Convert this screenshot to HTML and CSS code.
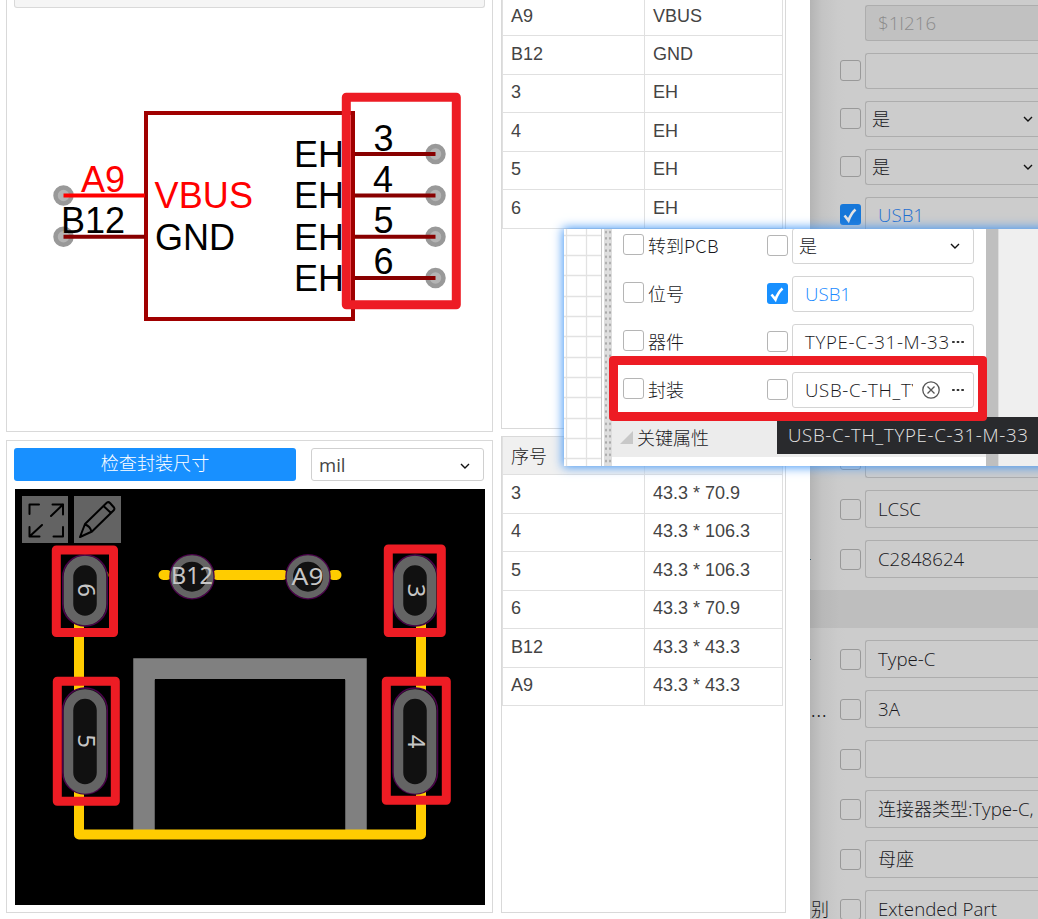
FILE: index.html
```html
<!DOCTYPE html>
<html lang="zh-CN">
<head>
<meta charset="utf-8">
<title>封装管理器</title>
<link rel="stylesheet" href="styles.css">
</head>
<body>
<div class="app">
  <main class="dialog">
    <div class="column previews">
      <section class="card symbol">
        <div class="strip"></div>
        <svg class="schematic" viewBox="7 8 485 423" width="485" height="423">
          <rect x="146" y="113" width="207" height="206" fill="none" stroke="#a00000" stroke-width="4"/>
          <g fill="#b4b4b4" stroke="#999" stroke-width="4.5">
            <circle cx="63.500" cy="195.500" r="8"/><circle cx="63.500" cy="236.700" r="8"/>
            <circle cx="435.500" cy="154" r="8"/><circle cx="435.500" cy="195.500" r="8"/>
            <circle cx="435.500" cy="236.700" r="8"/><circle cx="435.500" cy="278" r="8"/>
          </g>
          <g stroke="#880000" stroke-width="4">
            <path d="M63.500 236.700H145M355 154h80.500M355 195.500h80.500M355 236.700h80.500M355 278h80.500"/>
            <path d="M63.500 195.500H145" stroke="#f00"/>
          </g>
          <g class="pins">
            <text x="81" y="192" class="active">A9</text>
            <text x="61" y="233">B12</text>
            <text x="154.500" y="208" class="active" textLength="98.500">VBUS</text>
            <text x="155" y="250" textLength="80">GND</text>
            <text x="294" y="167">EH</text><text x="294" y="208">EH</text>
            <text x="294" y="250">EH</text><text x="294" y="291">EH</text>
            <text x="373.500" y="151">3</text><text x="373" y="192">4</text>
            <text x="373.500" y="233">5</text><text x="373.500" y="274">6</text>
          </g>
          <rect class="mark" x="346.300" y="97.300" width="110" height="207.500"/>
        </svg>
      </section>
      <section class="card footprint">
        <div class="toolbar">
          <button class="check-size">检查封装尺寸</button>
          <div class="select unit"><span>mil</span><svg class="chev" viewBox="0 0 10 6"><path d="M1 1l4 4 4-4"/></svg></div>
        </div>
        <svg class="board" viewBox="15 489 470 416" width="470" height="416">
          <rect x="15" y="489" width="470" height="416" fill="#000"/>
          <path d="M144 830V669H356V830" fill="none" stroke="#808080" stroke-width="21.500"/>
          <rect x="155" y="679" width="190" height="152" fill="#000"/>
          <g fill="none" stroke="#ffcc00" stroke-width="10" stroke-linecap="round" stroke-linejoin="round">
            <path d="M79 610V834.500H421V610M103.500 575H98M397.500 575H402M163.500 575H167M217 575H283M333 575H336.500"/>
          </g>
          <g fill="#111" stroke="#4b004b" stroke-width="1.500">
            <circle cx="192" cy="576.700" r="22"/><circle cx="308" cy="576.700" r="22"/>
            <rect x="62.800" y="555" width="44.500" height="71" rx="22"/><rect x="393" y="555" width="44.500" height="71" rx="22"/>
            <rect x="62.800" y="688" width="44.500" height="106" rx="22"/><rect x="393" y="688" width="44.500" height="106" rx="22"/>
          </g>
          <g fill="#111" stroke="#646464" stroke-width="9.500">
            <circle cx="192" cy="576.700" r="18.200" stroke-width="6.500"/><circle cx="308" cy="576.700" r="18.200" stroke-width="6.500"/>
            <rect x="68.500" y="560.500" width="33" height="60" rx="16.500"/><rect x="398.500" y="560.500" width="33" height="60" rx="16.500"/>
            <rect x="68.500" y="694" width="33" height="95" rx="16.500"/><rect x="398.500" y="694" width="33" height="95" rx="16.500"/>
          </g>
          <g class="pads">
            <text x="192" y="584" textLength="42" lengthAdjust="spacingAndGlyphs">B12</text>
            <text x="307.500" y="584.500" textLength="32" lengthAdjust="spacingAndGlyphs" class="wide">A9</text>
            <text transform="translate(77.500 590) rotate(90)">6</text>
            <text transform="translate(408 590.500) rotate(90)">3</text>
            <text transform="translate(77.500 741) rotate(90)">5</text>
            <text transform="translate(408 741.500) rotate(90)">4</text>
          </g>
          <path d="M22 496h46v47H22zM74 496h47v47H74z" fill="#636363"/>
          <g fill="none" stroke="#000" stroke-width="2" stroke-linejoin="round" stroke-linecap="round">
            <path d="M39 504.500H29.500V514M52.500 504.500H63V514.500M63 504.500L51 516M29.500 527V536.500H39.500M29.500 536.500L42 525M53.500 536.500H63V527"/>
            <path d="M80 537L85 524L107 502.500Q108.500 501.500 110 503L114 507.500Q115 509 113.500 510.500L92 531.500ZM85 524.500Q90 526 91.500 531.500M103.500 506L111 513"/>
          </g>
          <rect class="mark" x="56.300" y="550" width="57.200" height="82.500"/>
          <rect class="mark" x="388.300" y="549" width="53" height="83.500"/>
          <rect class="mark" x="57.300" y="681.300" width="58" height="120"/>
          <rect class="mark" x="386.300" y="681.300" width="60" height="119"/>
        </svg>
      </section>
    </div>
    <div class="column tables">
      <section class="card pins-card">
        <table>
          <tr><td>A9</td><td>VBUS</td></tr>
          <tr><td>B12</td><td>GND</td></tr>
          <tr><td>3</td><td>EH</td></tr>
          <tr><td>4</td><td>EH</td></tr>
          <tr><td>5</td><td>EH</td></tr>
          <tr><td>6</td><td>EH</td></tr>
        </table>
      </section>
      <section class="card pads-card">
        <table>
          <tr class="head"><th>序号</th><th></th></tr>
          <tr><td>3</td><td>43.3 * 70.9</td></tr>
          <tr><td>4</td><td>43.3 * 106.3</td></tr>
          <tr><td>5</td><td>43.3 * 106.3</td></tr>
          <tr><td>6</td><td>43.3 * 70.9</td></tr>
          <tr><td>B12</td><td>43.3 * 43.3</td></tr>
          <tr><td>A9</td><td>43.3 * 43.3</td></tr>
        </table>
      </section>
    </div>
  </main>
  <aside class="props">
    <div class="group upper">
      <div class="prop"><i></i><i></i><div class="field disabled">$1I216</div></div>
      <div class="prop"><i></i><b class="box"></b><div class="field"></div></div>
      <div class="prop"><i></i><b class="box"></b><div class="field select"><span class="cjk">是</span><svg class="chev" viewBox="0 0 10 6"><path d="M1 1l4 4 4-4"/></svg></div></div>
      <div class="prop"><i></i><b class="box"></b><div class="field select"><span class="cjk">是</span><svg class="chev" viewBox="0 0 10 6"><path d="M1 1l4 4 4-4"/></svg></div></div>
      <div class="prop"><i></i><b class="box on"><svg viewBox="0 0 21 21"><path d="M4.500 11.500L8.500 16.500Q11 9.500 15.500 5.500"/></svg></b><div class="field link">USB1</div></div>
    </div>
    <div class="group lower">
      <div class="prop"><i></i><b class="box"></b><div class="field"></div></div>
      <div class="prop"><i></i><b class="box"></b><div class="field">LCSC</div></div>
      <div class="prop"><i class="dot"></i><b class="box"></b><div class="field">C2848624</div></div>
      <div class="section"></div>
      <div class="prop"><i class="dot"></i><b class="box"></b><div class="field">Type-C</div></div>
      <div class="prop"><i class="label dots">...</i><b class="box"></b><div class="field">3A</div></div>
      <div class="prop"><i></i><b class="box"></b><div class="field"></div></div>
      <div class="prop"><i></i><b class="box"></b><div class="field clip"><span class="cjk">连接器类型</span>:Type-C,</div></div>
      <div class="prop"><i></i><b class="box"></b><div class="field"><span class="cjk">母座</span></div></div>
      <div class="prop"><i class="label cjk">别</i><b class="box"></b><div class="field tight">Extended Part</div></div>
    </div>
  </aside>
</div>
<div class="popup">
  <div class="popup-body">
    <svg class="canvas-grid" viewBox="0 0 40 237">
      <path d="M2.500 0V237M22.500 0V237M0 6.500H37M0 26.500H37M0 46.500H37M0 67.500H37M0 87.500H37M0 107.500H37M0 128.500H37M0 148.500H37M0 168.500H37M0 189.500H37M0 209.500H37M0 229.500H37"/>
      <path class="edge" d="M37.500 0V237"/>
    </svg>
    <div class="grip"></div>
    <div class="panel">
      <div class="row first"><b class="box"></b><label>转到<span class="pcb">PCB</span></label><b class="box val"></b><div class="field select"><span class="cjk">是</span><svg class="chev" viewBox="0 0 10 6"><path d="M1 1l4 4 4-4"/></svg></div></div>
      <div class="row"><b class="box"></b><label>位号</label><b class="box val on"><svg viewBox="0 0 21 21"><path d="M4.500 11.500L8.500 16.500Q11 9.500 15.500 5.500"/></svg></b><div class="field link">USB1</div></div>
      <div class="row"><b class="box"></b><label>器件</label><b class="box val"></b><div class="field"><span class="device">TYPE-C-31-M-33</span><svg class="more" viewBox="0 0 14 3"><path d="M0 0h3v3H0zM5.500 0h3v3h-3zM11 0h3v3h-3z"/></svg></div></div>
      <div class="row"><b class="box"></b><label>封装</label><b class="box val"></b><div class="field"><span class="package">USB-C-TH_TYPE</span><svg class="clear" viewBox="0 0 18 18"><circle cx="9" cy="9" r="8.200"/><path d="M5.500 5.500l7 7M12.500 5.500l-7 7"/></svg><svg class="more" viewBox="0 0 14 3"><path d="M0 0h3v3H0zM5.500 0h3v3h-3zM11 0h3v3h-3z"/></svg></div></div>
      <div class="key-section"><svg viewBox="0 0 13 13"><path d="M13 0v13H0z"/></svg><span>关键属性</span></div>
    </div>
    <div class="scroll"></div>
    <div class="rest"></div>
  </div>
  <div class="tooltip">USB-C-TH_TYPE-C-31-M-33</div>
  <div class="highlight"></div>
</div>
</body>
</html>
```

FILE: styles.css
```css
* { box-sizing: border-box; }
body {
  margin: 0;
  width: 1038px;
  height: 919px;
  position: relative;
  overflow: hidden;
  background: #fff;
  color: #18181c;
  font: 300 18px/24px "Noto Sans CJK SC", sans-serif;
}
svg { display: block; flex: none; }
i { font-style: normal; }
.app { display: flex; height: 919px; overflow: hidden; }
.dialog { display: flex; gap: 8px; width: 810px; padding-left: 6px; flex: none; }
.column { display: flex; flex-direction: column; gap: 8px; }
.previews { width: 487px; }
.tables { width: 285px; gap: 7px; }
.card { border: 1px solid #d9d9d9; background: #fff; }
.symbol { height: 432px; border-top: 0; }
.strip { height: 8px; margin: 0 7px; background: #f5f5f5; border: 1px solid #d9d9d9; border-top: 0; border-radius: 0 0 3px 3px; }
.pins { font: 400 36px "Liberation Sans", Arial, sans-serif; fill: #000; }
.pins .active { fill: #f00; }
.mark { fill: none; stroke: #ed1c24; stroke-width: 9px; stroke-linejoin: round; }
.footprint { height: 473px; padding: 7px; }
.toolbar { display: flex; gap: 15px; height: 33px; margin-bottom: 8px; }
.check-size { width: 282px; height: 33px; border: 0; border-radius: 3px; padding: 0 0 4px; background: #1890ff; color: #fff; font: 300 18.100px/29px "Noto Sans CJK SC", sans-serif; }
.select { display: flex; align-items: center; justify-content: space-between; }
.chev { width: 10px; height: 6px; fill: none; stroke: #111; stroke-width: 1.4px; }
.unit { width: 173px; height: 33px; padding: 0 13px 0 7px; border: 1px solid #d0d0d0; border-radius: 3px; font: 400 18.5px/30px "Open Sans", sans-serif; color: #444; }
.unit .chev { margin-top: 2px; }
.board { margin-left: 1px; }
.pads { font: 400 24px "Noto Sans", sans-serif; fill: #c6c6c6; text-anchor: middle; }

.pins-card { height: 429px; border-top: 0; }
.pads-card { height: 477px; }
table { width: 281px; border-collapse: separate; border-spacing: 0; table-layout: fixed; font: 400 18px/24px "Liberation Sans", Arial, sans-serif; color: #444; border-left: 1px solid #e0e0e0; }
td, th { height: 38.5px; padding: 0 8px 2px; border-right: 1px solid #e0e0e0; border-bottom: 1px solid #e0e0e0; text-align: left; font-weight: 400; white-space: nowrap; }
td:first-child, th:first-child { width: 142px; }
.pins-card tr:first-child td { height: 36px; padding-bottom: 4px; }
.head th { height: 38px; background: #f0f0f0; font: 300 18px/24px "Noto Sans CJK SC", sans-serif; color: #222; }

.props { flex: 1; min-width: 0; background: linear-gradient(90deg, #b4b4b4, #c4c4c4 12px, #cbcbcb 28px, #cccccc 36px); }
.group { display: flex; flex-direction: column; gap: 12px; }
.upper { padding-top: 5px; }
.lower { margin-top: 207px; }
.prop { display: grid; grid-template-columns: 30px 25px 1fr; align-items: center; height: 36px; }
.lower .prop { height: 38px; flex: none; }
.box { width: 21px; height: 21px; display: block; flex: none; border: 1px solid #999; border-radius: 3px; margin-bottom: 1px; }
.lower .box { margin: 0; position: relative; }
.box.on { background: #1677d9; border: 0; }
.box svg { width: 21px; height: 21px; fill: none; stroke: #e4e4e4; stroke-width: 2.6px; }
.field { height: 100%; min-width: 0; display: flex; align-items: center; border: 1px solid #adadad; border-radius: 3px; padding-left: 12px; font: 300 18.7px/26px "Open Sans", "Noto Sans CJK SC", sans-serif; white-space: nowrap; }
.props .field { border-right: 0; border-radius: 3px 0 0 3px; }
.cjk { font: 300 18px/24px "Noto Sans CJK SC", sans-serif; padding-bottom: 2px; }
.field.select { padding-left: 6px; }
.props .select { padding-right: 5px; }
.disabled { background: #c1c1c1; color: #8c8c8c; }
.link { color: #1f6fd0; }
.clip { letter-spacing: -0.02px; }
.dot { width: 1px; height: 1px; background: #356; }
.label { padding-left: 1px; }
.dots { letter-spacing: 1px; font-size: 18px; }
.section { height: 38px; background: linear-gradient(90deg, #a9a9a9, #b8b8b8 12px, #bebebe 30px); }

.popup { position: absolute; left: 564px; top: 229px; width: 490px; height: 237px; background: #fff; box-shadow: 0 0 10px 1px #3e94f5; }
.popup-body { display: flex; height: 237px; overflow: hidden; }
.canvas-grid { width: 40px; height: 237px; fill: none; stroke: #e2e2e2; stroke-width: 1.3px; }
.canvas-grid .edge { stroke: #c8c8c8; stroke-width: 1px; }
.grip { width: 8px; flex: none; background: radial-gradient(circle, #a8a8a8 0.900px, #dedede 1.300px) 0 0 / 4px 6.200px; }
.panel { width: 374px; flex: none; display: flex; flex-direction: column; }
.row { display: flex; align-items: center; height: 36px; margin: 0 12px 12px 11px; flex: none; }
.row.first { margin-top: -1px; }
.popup .box { border-color: #b5b5b5; margin-bottom: 3px; }
.popup .box.val { margin: 0 4px 1px 0; }
.popup .box.on { background: #1890ff; }
.popup .box svg { stroke: #fff; }
.row label { width: 119px; margin-left: 4px; padding-bottom: 2px; font: 300 18px/24px "Noto Sans CJK SC", sans-serif; }
.pcb { letter-spacing: 0.3px; }
.row .field { flex: 1; border-color: #d4d4d4; padding-right: 8px; }
.row .field.select { padding-right: 13px; }
.row .link { color: #2089ff; }
.device, .package { letter-spacing: 0.670px; }
.device { width: 146px; }
.package { width: 108px; overflow: hidden; }
.more { width: 14px; height: 2.5px; margin-left: auto; fill: #333; }
.clear { width: 18px; height: 18px; margin-left: 9px; fill: none; stroke: #555; stroke-width: 1.3px; }
.key-section { display: flex; align-items: center; height: 38px; margin-top: -1px; padding: 0 0 0 8px; gap: 4px; background: #ececec; flex: none; }
.key-section svg { width: 13px; height: 13px; margin-bottom: 2px; fill: #c8c8c8; }
.key-section span { padding-bottom: 2px; }
.scroll { width: 12px; flex: none; background: #bfbfbf; }
.rest { flex: 1; background: #efefef; border-left: 1px solid #ddd; }
.tooltip { position: absolute; left: 213px; top: 188px; width: 277px; height: 37px; padding: 5px 11px; background: #292a2d; color: #e4e4e4; font: 300 18.7px/26px "Open Sans", sans-serif; letter-spacing: 0.670px; white-space: nowrap; }
.highlight { position: absolute; left: 45px; top: 127px; width: 378px; height: 65px; border: 9px solid #ed1c24; border-radius: 4px; }
```
